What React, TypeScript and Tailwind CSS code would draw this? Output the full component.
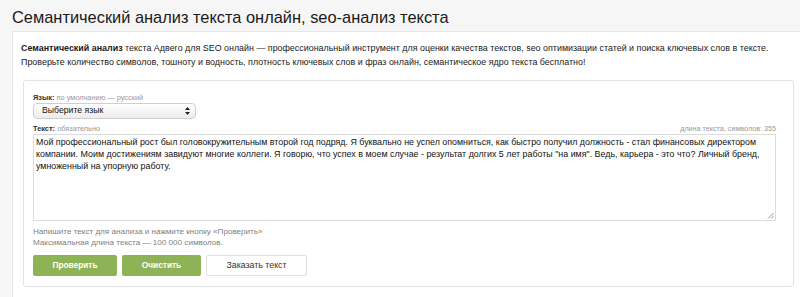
import React from "react";

export default function App() {
  const text =
    'Мой профессиональный рост был головокружительным второй год подряд. Я буквально не успел опомниться, как быстро получил должность - стал финансовых директором компании. Моим достижениям завидуют многие коллеги. Я говорю, что успех в моем случае - результат долгих 5 лет работы "на имя". Ведь, карьера - это что? Личный бренд, умноженный на упорную работу.';
  return (
    <div className="w-[800px] h-[297px] overflow-hidden bg-[#f6f6f6] text-[#222]" style={{ fontFamily: '"Liberation Sans", Arial, sans-serif' }}>
      <div className="h-[31px] pl-[12px] flex items-center">
        <h1 className="text-[16.4px] leading-none text-[#1a1a1a] pt-[4px]">Семантический анализ текста онлайн, seo-анализ текста</h1>
      </div>
      <div className="ml-[12px] w-[800px] h-[266px] bg-white border-l border-t border-[#e6e6e6] pl-[8px] pt-[9px]">
        <p className="text-[8.92px] leading-[14px] text-[#1a1a1a]">
          <b>Семантический анализ</b> текста Адвего для SEO онлайн — профессиональный инструмент для оценки качества текстов, seo оптимизации статей и поиска ключевых слов в тексте.
          <br />
          Проверьте количество символов, тошноту и водность, плотность ключевых слов и фраз онлайн, семантическое ядро текста бесплатно!
        </p>
        <div className="mt-[11px] ml-[2px] w-[771px] h-[207px] border border-[#e3e3e3] rounded-[3px] pl-[9px] pt-[12px]">
          <div className="text-[7.4px] leading-[10px]">
            <span className="text-[#333] font-bold">Язык:</span> <span className="text-[#999]">по умолчанию — русский</span>
          </div>
          <div className="w-[163px] h-[16px] rounded-[4px] border border-[#cfcfcf] bg-gradient-to-b from-white to-[#ececec] flex items-center justify-between pl-[8px] pr-[5px] text-[8.7px] text-[#111]">
            <span>Выберите язык</span>
            <svg width="5" height="8" viewBox="0 0 5 8">
              <path d="M2.5 0 L5 3 L0 3 Z" fill="#222" />
              <path d="M2.5 8 L5 5 L0 5 Z" fill="#222" />
            </svg>
          </div>
          <div className="mt-[5px] w-[743px] flex justify-between items-end text-[7.4px] leading-[10px]">
            <div>
              <span className="text-[#333] font-bold">Текст:</span> <span className="text-[#999]">обязательно</span>
            </div>
            <span className="text-[#999] text-[7.2px]">длина текста, символов: 355</span>
          </div>
          <div className="relative w-[743px] h-[87px] border border-[#dcdcdc] bg-white pl-[2px] pr-[1px] pt-[1px] text-[8.9px] leading-[12px] text-[#111]">
            {text}
            <svg className="absolute right-[1px] bottom-[1px]" width="7" height="7" viewBox="0 0 7 7">
              <path d="M6.5 1 L1 6.5 M6.5 4 L4 6.5" stroke="#999" strokeWidth="1" />
            </svg>
          </div>
          <div className="mt-[5px] text-[8.1px] leading-[11px] text-[#808080]">
            Напишите текст для анализа и нажмите кнопку «Проверить»
            <br />
            Максимальная длина текста — 100 000 символов.
          </div>
          <div className="mt-[7px] flex gap-[5px]">
            <button className="w-[84px] h-[21px] rounded-[2px] bg-[#8db356] text-white text-[8.3px] font-bold">Проверить</button>
            <button className="w-[79px] h-[21px] rounded-[2px] bg-[#8db356] text-white text-[8.3px] font-bold">Очистить</button>
            <button className="w-[101px] h-[21px] rounded-[2px] bg-white border border-[#e0e0e0] text-[#333] text-[8.8px]">Заказать текст</button>
          </div>
        </div>
      </div>
    </div>
  );
}
